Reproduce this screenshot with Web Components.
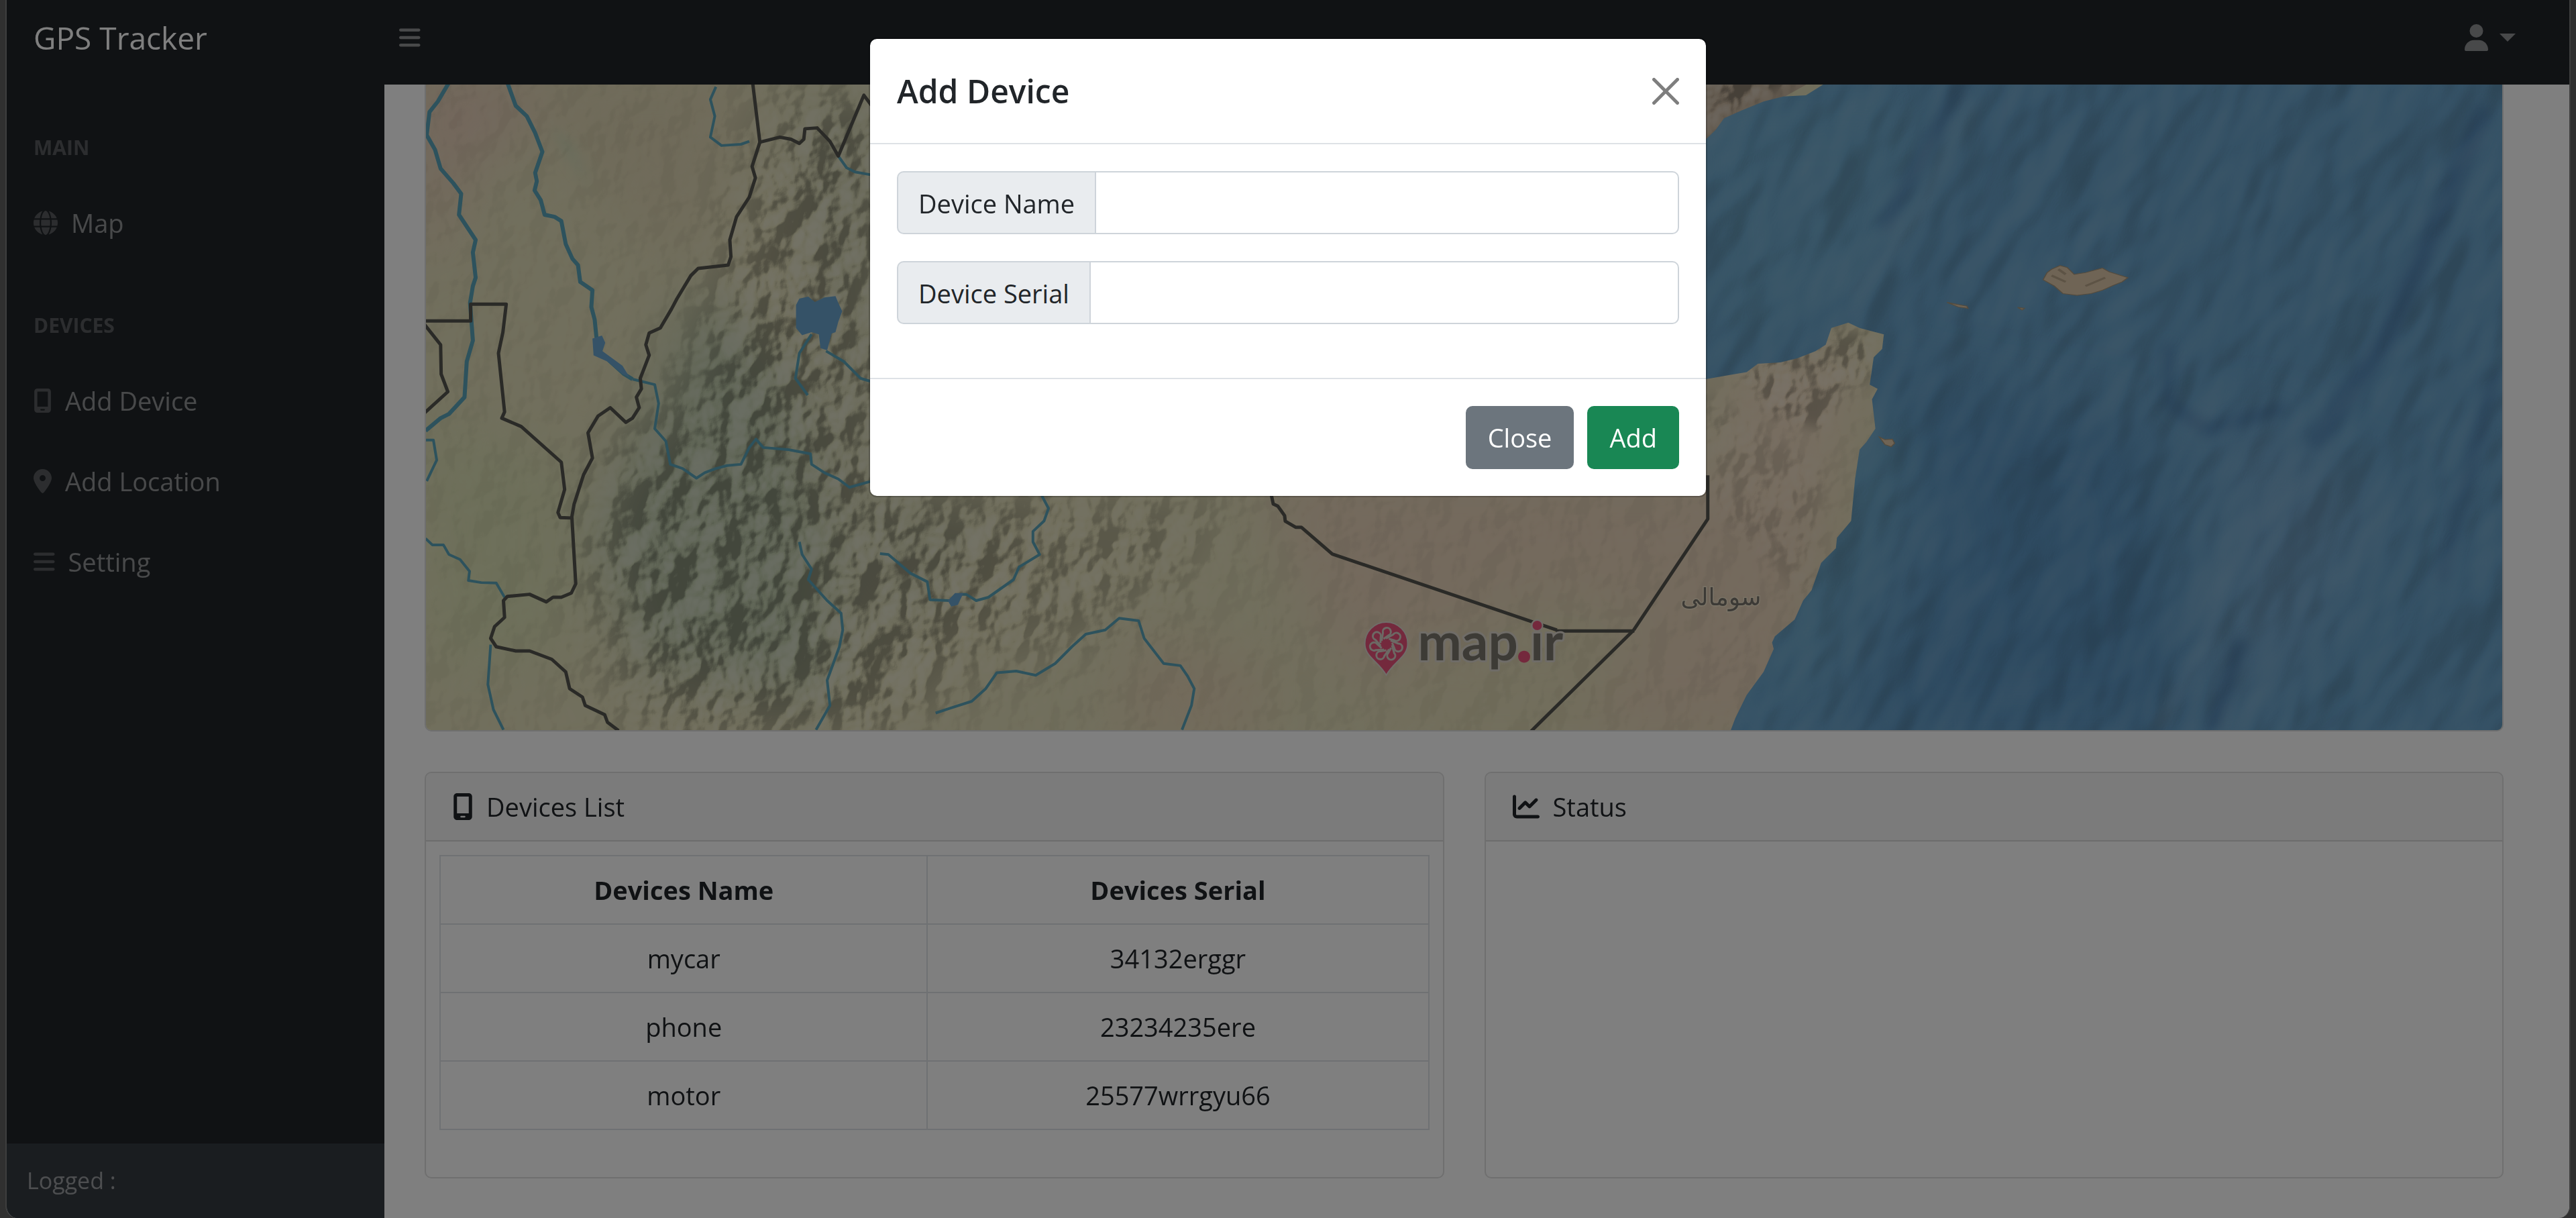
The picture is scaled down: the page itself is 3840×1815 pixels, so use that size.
<!DOCTYPE html>
<html lang="en">
<head>
<meta charset="utf-8">
<title>GPS Tracker</title>
<style>
  html, body { margin: 0; height: 100%; background: #303030; }
  body { font-family: "Open Sans", "Noto Sans", sans-serif; font-size: 38px; line-height: 60px; color: #212529; overflow: hidden; }
</style>
</head>
<body>
<gps-app></gps-app>
<script>
const define = (name, html, setup) => {
  const template = document.createElement('template');
  template.innerHTML = html;
  customElements.define(name, class extends HTMLElement {
    connectedCallback() {
      if (this.shadowRoot) return;
      this.attachShadow({ mode: 'open' }).append(template.content.cloneNode(true));
      if (setup) setup(this, this.shadowRoot);
    }
  });
};

const prependIcon = (host, parent) => {
  const icon = document.createElement('ui-icon');
  icon.setAttribute('name', host.getAttribute('icon'));
  parent.prepend(icon);
};

const ICONS = {
  globe: [512, 'M352 256c0 22.2-1.2 43.6-3.3 64H163.3c-2.2-20.4-3.3-41.8-3.3-64s1.2-43.6 3.3-64H348.7c2.2 20.4 3.3 41.8 3.3 64zm28.8-64H503.9c5.3 20.5 8.1 41.9 8.1 64s-2.8 43.5-8.1 64H380.8c2.1-20.6 3.2-42 3.2-64s-1.1-43.4-3.2-64zm112.6-32H376.7c-10-63.9-29.8-117.4-55.3-151.6c78.3 20.7 142 77.5 171.9 151.6zm-149.1 0H167.7c6.1-36.4 15.5-68.6 27-94.7c10.5-23.6 22.2-40.7 33.5-51.5C239.4 3.2 248.7 0 256 0s16.6 3.2 27.8 13.8c11.3 10.8 23 27.9 33.5 51.5c11.6 26 20.9 58.2 27 94.7zm-209 0H18.6C48.6 85.9 112.2 29.1 190.6 8.4C165.1 42.6 145.3 96.1 135.3 160zM8.1 192H131.2c-2.1 20.6-3.2 42-3.2 64s1.1 43.4 3.2 64H8.1C2.8 299.5 0 278.1 0 256s2.8-43.5 8.1-64zM194.7 446.6c-11.6-26-20.9-58.2-27-94.6H344.3c-6.1 36.4-15.5 68.6-27 94.6c-10.5 23.6-22.2 40.7-33.5 51.5C272.6 508.8 263.3 512 256 512s-16.6-3.2-27.8-13.8c-11.3-10.8-23-27.9-33.5-51.5zM135.3 352c10 63.9 29.8 117.4 55.3 151.6C112.2 482.9 48.6 426.1 18.6 352H135.3zm358.1 0c-30 74.1-93.6 130.9-171.9 151.6c25.5-34.2 45.2-87.7 55.3-151.6H493.4z'],
  mobile: [384, 'M16 64C16 28.7 44.7 0 80 0H304c35.3 0 64 28.7 64 64V448c0 35.3-28.7 64-64 64H80c-35.3 0-64-28.7-64-64V64zM144 448c0 8.8 7.2 16 16 16h64c8.8 0 16-7.2 16-16s-7.2-16-16-16H160c-8.8 0-16 7.2-16 16zM304 64H80V384H304V64z'],
  pin: [384, 'M215.7 499.2C267 435 384 279.4 384 192C384 86 298 0 192 0S0 86 0 192c0 87.4 117 243 168.3 307.2c12.3 15.3 35.1 15.3 47.4 0zM192 128a64 64 0 1 1 0 128 64 64 0 1 1 0-128z'],
  bars: [448, 'M0 96C0 78.3 14.3 64 32 64H416c17.7 0 32 14.3 32 32s-14.3 32-32 32H32C14.3 128 0 113.7 0 96zM0 256c0-17.7 14.3-32 32-32H416c17.7 0 32 14.3 32 32s-14.3 32-32 32H32c-17.7 0-32-14.3-32-32zM448 416c0 17.7-14.3 32-32 32H32c-17.7 0-32-14.3-32-32s14.3-32 32-32H416c17.7 0 32 14.3 32 32z'],
  user: [448, 'M224 256A128 128 0 1 0 224 0a128 128 0 1 0 0 256zm-45.7 48C79.8 304 0 383.8 0 482.3C0 498.7 13.3 512 29.7 512H418.3c16.4 0 29.7-13.3 29.7-29.7C448 383.8 368.2 304 269.7 304H178.3z'],
  chart: [512, 'M64 64c0-17.7-14.3-32-32-32S0 46.3 0 64V400c0 44.2 35.8 80 80 80H480c17.7 0 32-14.3 32-32s-14.3-32-32-32H80c-8.8 0-16-7.2-16-16V64zm406.6 86.6c12.5-12.5 12.5-32.8 0-45.3s-32.8-12.5-45.3 0L320 210.7l-57.4-57.4c-12.5-12.5-32.8-12.5-45.3 0l-112 112c-12.5 12.5-12.5 32.8 0 45.3s32.8 12.5 45.3 0L240 221.3l57.4 57.4c12.5 12.5 32.8 12.5 45.3 0l128-128z']
};

define('ui-icon', `
<style>
  :host { display: block; flex: none; height: var(--icon-size, 40px); }
  svg { display: block; height: 100%; width: auto; fill: currentColor; fill-rule: evenodd; }
</style>
<svg aria-hidden="true"><path/></svg>`, (host, root) => {
  const [w, d] = ICONS[host.getAttribute('name')];
  root.querySelector('svg').setAttribute('viewBox', `0 0 ${w} 512`);
  root.querySelector('path').setAttribute('d', d);
});

define('top-bar', `
<style>
  :host { display: flex; align-items: center; box-sizing: border-box; height: 126px; padding: 0 80px 14px 40px; background: #212529; flex: none; }
  .brand { flex: none; box-sizing: border-box; width: 523px; color: #fff; font-size: 46px; line-height: 75px; text-decoration: none; }
  button { display: flex; align-items: center; background: none; border: 0; margin: 0; padding: 0; color: rgba(255,255,255,.5); }
  .toggle { padding: 0 22px; --icon-size: 36px; }
  .user { margin-left: auto; gap: 17px; --icon-size: 40px; }
  .caret { border: 12px solid transparent; border-top-color: currentColor; border-bottom: 0; }
</style>
<a class="brand" href="#">GPS Tracker</a>
<button class="toggle" aria-label="Toggle navigation"><ui-icon name="bars"></ui-icon></button>
<button class="user" aria-label="Account"><ui-icon name="user"></ui-icon><span class="caret"></span></button>`);

define('nav-link', `
<style>
  :host { display: block; --icon-size: 36px; }
  a { display: flex; align-items: center; gap: 20px; padding: 30px 40px; color: rgba(255,255,255,.5); text-decoration: none; }
  ui-icon { color: rgba(255,255,255,.25); }
</style>
<a href="#"><slot></slot></a>`, (host, root) => prependIcon(host, root.querySelector('a')));

define('side-nav', `
<style>
  :host { display: flex; flex-direction: column; width: 563px; flex: none; background: #212529; }
  nav { flex: 1; padding-top: 1px; }
  h2 { margin: 0; padding: 70px 40px 30px; font-size: 30px; line-height: 45px; font-weight: 700; color: rgba(255,255,255,.25); text-transform: uppercase; }
  footer { padding: 30px; background: #343a40; color: rgba(255,255,255,.5); font-size: 34px; line-height: 51px; }
</style>
<nav>
  <h2>Main</h2>
  <nav-link icon="globe">Map</nav-link>
  <h2>Devices</h2>
  <nav-link icon="mobile">Add Device</nav-link>
  <nav-link icon="pin">Add Location</nav-link>
  <nav-link icon="bars">Setting</nav-link>
</nav>
<footer>Logged :</footer>`);

define('info-card', `
<style>
  :host { display: block; border: 2px solid rgba(0,0,0,.125); border-radius: 10px; background: #fff; overflow: hidden; }
  header { display: flex; align-items: center; gap: 20px; padding: 20px 40px; border-bottom: 2px solid rgba(0,0,0,.125); background: rgba(0,0,0,.03); }
  .body { padding: 20px; }
</style>
<header><slot name="title"></slot></header>
<div class="body"><slot></slot></div>`, (host, root) => prependIcon(host, root.querySelector('header')));

define('device-table', `
<style>
  :host { display: block; }
  table { width: 100%; margin-bottom: 50px; border-collapse: collapse; text-align: center; }
  th, td { padding: 20px; border: 2px solid #dee2e6; }
  th:first-child { width: 49.3%; }
</style>
<table>
  <thead><tr><th>Devices Name</th><th>Devices Serial</th></tr></thead>
  <tbody>
    <tr><td>mycar</td><td>34132erggr</td></tr>
    <tr><td>phone</td><td>23234235ere</td></tr>
    <tr><td>motor</td><td>25577wrrgyu66</td></tr>
  </tbody>
</table>`);

define('map-view', `
<style>
  :host { display: block; height: 962px; border: 2px solid rgba(0,0,0,.125); border-top: 0; border-radius: 0 0 10px 10px; overflow: hidden; }
  svg { display: block; width: 100%; height: 100%; }
  .border path { fill: none; stroke: #55544e; stroke-width: 5; stroke-linejoin: round; vector-effect: non-scaling-stroke; }
  .river path { fill: none; stroke: #5aa4ba; stroke-width: 4; stroke-linejoin: round; vector-effect: non-scaling-stroke; }
  .river .wide { stroke-width: 6; }
  .river .water { fill: #6aa5cf; stroke: none; }
  .place { font: 36px "DejaVu Sans", sans-serif; fill: #79756c; stroke: #f1e4cb; stroke-width: 3; paint-order: stroke; }
  .word { font: 700 78px Lato, sans-serif; fill: #7a766d; stroke: #ded9cf; stroke-width: 6; stroke-linejoin: round; paint-order: stroke; }
  .word .dot { fill: #e9527a; stroke: #e9527a; }
  .relief { mix-blend-mode: hard-light; }
</style>
<svg viewBox="635 126 3096 962" preserveAspectRatio="xMidYMid slice" role="img" aria-label="Map">
  <defs>
    <filter id="soft" x="-50%" y="-50%" width="200%" height="200%"><feGaussianBlur stdDeviation="45"/></filter>
    <filter id="softer" x="-50%" y="-50%" width="200%" height="200%"><feGaussianBlur stdDeviation="9"/></filter>
    <filter id="relief" x="0" y="0" width="100%" height="100%" color-interpolation-filters="sRGB">
      <feTurbulence type="fractalNoise" baseFrequency="0.02 0.016" numOctaves="4" seed="12"/>
      <feColorMatrix values="0 0 0 0 0  0 0 0 0 0  0 0 0 0 0  1 0 0 0 0"/>
      <feGaussianBlur stdDeviation="2"/>
      <feDiffuseLighting surfaceScale="30" diffuseConstant="1" lighting-color="#fff"><feDistantLight azimuth="215" elevation="29"/></feDiffuseLighting>
    </filter>
    <filter id="seabed" x="0" y="0" width="100%" height="100%" color-interpolation-filters="sRGB">
      <feTurbulence type="fractalNoise" baseFrequency="0.010 0.005" numOctaves="3" seed="5"/>
      <feColorMatrix values="0 0 0 0 0  0 0 0 0 0  0 0 0 0 0  1 0 0 0 0"/>
      <feGaussianBlur stdDeviation="3"/>
      <feDiffuseLighting surfaceScale="26" diffuseConstant="1" lighting-color="#e4eeff"><feDistantLight azimuth="180" elevation="30"/></feDiffuseLighting>
    </filter>
    <mask id="hills" maskUnits="userSpaceOnUse" x="600" y="100" width="3200" height="1000">
      <rect x="600" y="100" width="3200" height="1000" fill="#1c1c1c"/>
      <g filter="url(#soft)" fill="#fff">
        <path d="M1150 160 L1330 130 1330 740 1560 740 1500 900 1330 1100 960 1100 880 860 900 700 1010 620 1080 430 Z"/>
        <path d="M1500 740 L1830 740 1760 860 1600 960 1400 1000 Z" opacity=".7"/>
      </g>
      <g filter="url(#softer)" fill="#fff">
        <path d="M2500 100 H2700 L2620 150 2540 200 Z"/>
        <path d="M2590 550 L2730 490 2800 500 2790 560 2740 590 2720 640 2640 620 Z" opacity=".8"/>
        <path d="M2540 580 L2720 700 2700 900 2560 760 Z" opacity=".3"/>
      </g>
    </mask>
    <clipPath id="sea"><path transform="translate(2520 120) scale(.8418 .625)" d="M0,0 H235 V10 L205,35 165,38 130,50 90,72 60,90 45,118 28,140 H0 V716 L28,712 70,702 100,695 120,675 160,672 190,662 222,645 240,630 250,590 280,577 300,590 343,605 340,640 325,660 318,725 332,735 322,760 328,830 312,862 300,880 292,950 285,1050 260,1090 258,1115 232,1150 215,1215 200,1240 185,1285 150,1325 145,1340 148,1355 130,1410 100,1465 80,1520 66,1570 H1460 V0 Z"/></clipPath>
  </defs>

  <rect x="600" y="100" width="3200" height="1000" fill="#e3deb9"/>
  <g filter="url(#soft)">
    <path d="M600 100 H900 L700 250 620 420 Z" fill="#e6cdb8"/>
    <path d="M760 100 H1120 L1040 400 900 300 Z" fill="#dfd5b3"/>
    <path d="M620 620 L850 680 850 980 640 1000 Z" fill="#dbdfb4"/>
    <path d="M1040 420 L1180 560 1240 800 1240 1040 960 1000 880 800 Z" fill="#c0cbac"/>
    <path d="M1180 140 L1340 130 1340 740 1500 760 1300 1000 1240 700 Z" fill="#d5d5b4"/>
    <path d="M1880 700 H2750 L2680 1100 H2150 L1980 960 Z" fill="#e8d3b9"/>
    <path d="M2050 1000 L2300 880 2480 920 2350 1100 2000 1100 Z" fill="#e4dcb8"/>
    <path d="M1700 960 L1900 1000 1880 1100 1660 1100 Z" fill="#e6d4b6"/>
    <path d="M2560 540 L2780 500 2740 740 2560 760 Z" fill="#eedac0"/>
  </g>
  <path d="M2500 100 H2740 L2560 200 2500 250 Z" fill="#c9b7a0"/>
  <path d="M820 185 L850 215 885 285 850 235 Z" fill="#c9d8b8" filter="url(#softer)"/>
  <g class="relief" mask="url(#hills)" opacity=".3"><rect x="600" y="100" width="3200" height="1000" filter="url(#relief)"/></g>

  <g clip-path="url(#sea)">
    <rect x="2500" y="100" width="1300" height="1000" fill="#6aa3ca"/>
    <g filter="url(#soft)">
      <path d="M2780 560 L3200 640 3260 1100 2760 1100 2900 800 Z" fill="#5d96c2"/>
      <path d="M2520 140 L2900 140 2800 420 2540 560 Z" fill="#70aacd"/>
      <path d="M2780 600 L2860 640 2700 1000 2620 1080 Z" fill="#70abca"/>
      <path d="M3330 620 L3560 740 3440 960 3300 1090 Z" fill="#76a8ce"/>
    </g>
    <g filter="url(#softer)" fill="none" stroke-linecap="round">
      <path d="M2922 130 L2860 245 2810 335" stroke="#588bb8" stroke-width="16"/>
      <path d="M2940 150 L2860 320 2765 440" stroke="#7fb2d2" stroke-width="12"/>
      <path d="M3700 170 L3655 280 3560 500 3455 655" stroke="#588cb9" stroke-width="28"/>
      <path d="M3232 520 V600 L3290 640 3400 610" stroke="#588cb9" stroke-width="18"/>
      <path d="M3720 560 L3640 860" stroke="#588cb9" stroke-width="16"/>
      <path d="M3310 860 L3290 960 3220 1080" stroke="#7cadd1" stroke-width="14"/>
      <path d="M3340 960 L3300 1080" stroke="#5486b3" stroke-width="20"/>
    </g>
    <g class="relief" opacity=".12"><g transform="rotate(28 3150 600)"><rect x="2350" y="-150" width="1600" height="1500" filter="url(#seabed)"/></g></g>
  </g>

  <g transform="translate(2520 120) scale(.8418 .625)" fill="#dfc9ab" stroke="#a9977c" stroke-width="2">
    <path d="M625,475 L632,458 640,450 655,441 668,446 680,462 700,458 730,447 742,456 775,470 765,480 750,488 730,500 710,508 685,512 660,508 645,490 Z"/>
    <path d="M455,529 L470,533 490,538 492,543 475,540 Z M580,541 L592,543 588,547 Z M335,850 L345,856 358,855 362,865 356,873 345,868 Z"/>
    <path d="M640,465 L665,480 M700,490 L735,470 M652,450 L665,462" fill="none" stroke-width="5" opacity=".7"/>
  </g>

  <g class="river" transform="translate(620 120) scale(.8291 .625)">
    <path class="wide" d="M60,5 L40,50 25,75 20,130 35,165 45,210 68,245 82,270 78,320 108,380 103,410 108,470 103,490 98,530 103,620 92,670 88,755 60,795 45,805 18,835"/>
    <path class="wide" d="M165,5 L180,60 200,85 215,125 228,170 215,220 218,240 214,262 225,285 232,320 250,325 262,335 270,390 282,425 292,440 296,480 318,500 316,540 322,570 325,610 330,645 350,670 375,700 390,712"/>
    <path d="M390,712 L430,725 437,770 430,830 450,860 458,915 480,925 505,948 520,935 540,925 560,918 585,915 600,875 612,855 625,875 670,880 710,890 712,915 735,935 760,950 780,970 820,955"/>
    <path d="M540,15 L530,45 538,85 530,135 550,155 585,152 600,145"/>
    <path d="M760,180 L775,208 790,218 820,225"/>
    <path d="M712,605 L690,650 683,710 705,750 M738,645 L770,670 800,710 820,718"/>
    <path d="M18,857 H32 L38,905 20,955"/>
    <path d="M18,1092 L30,1107 50,1107 60,1130 80,1142 97,1170 95,1192 118,1197 145,1198 160,1232"/>
    <path d="M135,1345 L130,1440 140,1500 158,1548"/>
    <path d="M1126,990 L1138,1020 1130,1050 1110,1075 1110,1100 1122,1130 1085,1160 1075,1190 1030,1232 1008,1240 990,1225 980,1225 M960,1240 L925,1238 920,1195 890,1175 850,1130 835,1128"/>
    <path d="M690,1100 L695,1130 712,1165 706,1190 740,1240 765,1270 768,1310 762,1350 740,1430 745,1490 720,1548"/>
    <path d="M935,1508 L960,1497 1000,1480 1025,1450 1045,1412 1080,1408 1115,1418 1150,1390 1180,1350 1205,1320 1240,1310 1265,1282 1300,1288 1310,1330 1345,1390 1375,1395 1388,1420 1400,1450 1395,1490 1378,1548"/>
    <path class="water" d="M684,535 L690,520 706,515 718,528 735,517 755,514 760,530 767,550 760,575 755,600 748,603 740,643 728,638 725,605 712,600 695,607 684,590 Z"/>
    <path class="water" d="M318,615 L335,608 341,625 336,645 372,680 385,708 372,700 345,670 320,655 Z M957,1240 L970,1222 985,1222 975,1250 963,1254 Z"/>
  </g>
  <g class="border" transform="translate(620 120) scale(.8291 .625)">
    <path d="M606,5 L619,147 L605,205 611,232 600,278 577,325 565,380 567,420 562,440 508,448 495,465 470,520 460,545 440,590 420,602 414,630 420,655 404,710 406,735 397,755 402,780 390,805 378,815 350,780 328,800 310,840 318,900 302,940 285,1010 281,1040 284,1110 288,1200 280,1222 262,1232 247,1232 235,1243 205,1225 165,1230 158,1240 160,1280 142,1302 135,1330 145,1350 180,1360 205,1360 245,1380 270,1410 277,1450 300,1470 305,1490 340,1512 345,1530 365,1550"/>
    <path d="M619,147 L655,135 675,140 690,150 698,140 700,115 722,113 745,145 760,180 806,35 820,60"/>
    <path d="M15,573 H99 V533 H163 L157,600 149,650 160,790 155,805 190,825 262,910 268,975 256,1030 260,1042 281,1043"/>
    <path d="M15,580 L45,630 46,700 58,742 15,794"/>
  </g>
  <g class="border" transform="translate(1800 735) scale(.4975 .3333)">
    <path d="M192,5 L198,48 212,58 232,100 234,125 265,152 282,152 375,272 1048,612 M1278,612 L1500,115 V-80 M1278,612 L970,1065"/>
    <path d="M1045,616 H1280"/>
  </g>
  <text class="place" x="2506" y="902">سومالی</text>

  <g stroke="#e0dbd2">
    <path d="M2067 1006 C2055 985 2035 979 2035 959 A32 32 0 0 1 2099 959 C2099 979 2079 985 2067 1006 Z" fill="#e9527a" stroke-width="2"/>
    <g id="loops" fill="none" stroke="#d8d2c9" stroke-width="3"></g>
  </g>
  <text class="word" x="2114" y="984">map<tspan class="dot">.</tspan>ir</text>
  <circle cx="2292" cy="932" r="8" fill="#e9527a" stroke="#ded9cf" stroke-width="2"/>
</svg>`, (host, root) => {
  const loops = root.getElementById('loops');
  for (let i = 0; i < 7; i++) {
    const p = document.createElementNS('http://www.w3.org/2000/svg', 'path');
    p.setAttribute('d', 'M2060 955 L2062 943 A6 6 0 1 1 2070 947 L2063 952');
    p.setAttribute('transform', `rotate(${i * 360 / 7} 2067 960)`);
    loops.append(p);
  }
});

define('text-field', `
<style>
  :host { display: flex; margin-bottom: 40px; }
  label, input { box-sizing: border-box; height: 94px; border: 2px solid #ced4da; }
  label { padding: 16px 30px 14px; border-right: 0; border-radius: 10px 0 0 10px; background: #e9ecef; }
  input { flex: 1; min-width: 0; margin: 0; padding: 15px 30px; border-radius: 0 10px 10px 0; background: #fff; font: inherit; color: inherit; }
</style>
<label for="field"><slot></slot></label><input id="field" type="text">`, (host, root) => {
  root.querySelector('input').setAttribute('aria-label', host.textContent);
});

define('device-modal', `
<style>
  :host { display: flex; justify-content: center; align-items: flex-start; position: absolute; inset: 0; padding-top: 56px; background: rgba(0,0,0,.5); }
  section { width: 1246px; max-width: 90%; border: 2px solid rgba(0,0,0,.2); border-radius: 12px; background: #fff; background-clip: padding-box; }
  header { display: flex; align-items: center; justify-content: space-between; padding: 40px; border-bottom: 2px solid #dee2e6; }
  h1 { margin: 0; font-size: 48px; line-height: 75px; font-weight: 600; }
  button { border: 0; margin: 0; font: inherit; color: #fff; }
  .x { display: block; width: 40px; height: 40px; padding: 0; background: none; opacity: .5; }
  .x svg { display: block; fill: #000; }
  .body { padding: 40px; }
  footer { display: flex; justify-content: flex-end; gap: 20px; padding: 40px; border-top: 2px solid #dee2e6; }
  footer button { height: 94px; padding: 0 33px; border-radius: 10px; }
  .close { background: #6c757d; }
  .add { background: #198754; }
</style>
<section role="dialog" aria-labelledby="title">
  <header>
    <h1 id="title">Add Device</h1>
    <button class="x" aria-label="Dismiss"><svg viewBox="0 0 16 16" width="40" height="40"><path d="M.293.293a1 1 0 0 1 1.414 0L8 6.586 14.293.293a1 1 0 1 1 1.414 1.414L9.414 8l6.293 6.293a1 1 0 0 1-1.414 1.414L8 9.414l-6.293 6.293a1 1 0 0 1-1.414-1.414L6.586 8 .293 1.707a1 1 0 0 1 0-1.414z"/></svg></button>
  </header>
  <div class="body">
    <text-field>Device Name</text-field>
    <text-field>Device Serial</text-field>
  </div>
  <footer><button class="close">Close</button><button class="add">Add</button></footer>
</section>`);

define('gps-app', `
<style>
  :host { display: flex; flex-direction: column; position: relative; box-sizing: border-box; height: 100vh; margin: 0 8px; border: solid #3e3e3e; border-width: 0 2px; border-radius: 0 0 18px 18px; overflow: hidden; background: #fff; }
  .row { display: flex; flex: 1; min-height: 0; }
  main { flex: 1; min-width: 0; padding: 0 98px 0 60px; }
  .cards { display: grid; grid-template-columns: 1fr 1fr; gap: 60px; margin-top: 60px; }
</style>
<top-bar></top-bar>
<div class="row">
  <side-nav></side-nav>
  <main>
    <map-view></map-view>
    <div class="cards">
      <info-card icon="mobile"><span slot="title">Devices List</span><device-table></device-table></info-card>
      <info-card icon="chart"><span slot="title">Status</span></info-card>
    </div>
  </main>
</div>
<device-modal></device-modal>`);
</script>
</body>
</html>
